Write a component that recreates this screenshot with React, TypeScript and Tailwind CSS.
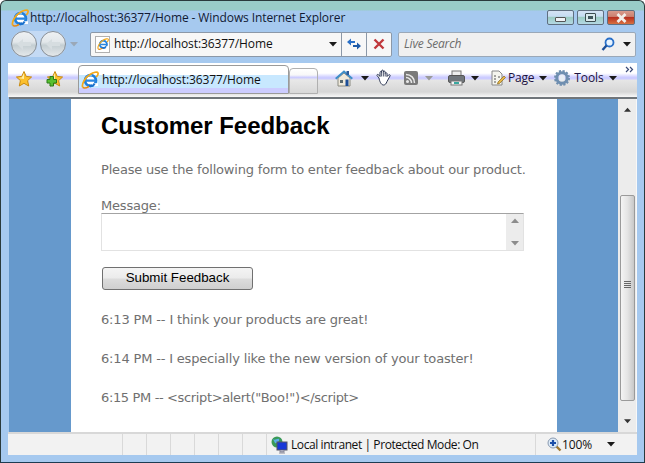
import React from "react";

const chrome = "font-['Open_Sans','Noto_Sans',sans-serif]";
const page = "font-['DejaVu_Sans',sans-serif]";

function IeLogo({ size = 18 }: { size?: number }) {
  return (
    <svg width={size} height={size} viewBox="0 0 18 18" className="shrink-0">
      <circle cx="9.5" cy="9.5" r="5.4" fill="#fff" stroke="#1f7fdc" strokeWidth="2.8" />
      <path d="M5 8.6H15V10.8H5Z" fill="#2a86e0" />
      <path d="M11 12.3H17V15H11Z" fill="#fff" />
      <path d="M13.5 12.6C12.5 14.8 10 15.6 7.6 14.6" fill="none" stroke="#1a70cc" strokeWidth="2.2" />
      <path d="M5.2 7.5C6 5 8.5 3.8 11 4.6" fill="none" stroke="#7cc4f8" strokeWidth="1.1" />
      <path d="M1.8 16.4C0.2 13.5 4 6.5 9 3.5C12.5 1.2 16.5 0.4 17 2C17.4 3.3 16.2 5 15.2 6" fill="none" stroke="#f4a818" strokeWidth="1.7" />
      <path d="M1.8 16.4C3.2 17.6 6 16.6 8 15.4" fill="none" stroke="#e88a10" strokeWidth="1.7" />
    </svg>
  );
}

function Caret({ color = "#1a1a1a", w = 8, className = "" }: { color?: string; w?: number; className?: string }) {
  return (
    <svg width={w} height={5} viewBox="0 0 8 5" className={`shrink-0 ${className}`}>
      <path d="M0 0H8L4 4.5Z" fill={color} />
    </svg>
  );
}

function Star({ plus = false }: { plus?: boolean }) {
  return (
    <svg width="18" height="18" viewBox="0 0 18 18" className="shrink-0">
      <path d="M9 1.5L11.2 6.4L16.6 7L12.6 10.6L13.7 16L9 13.3L4.3 16L5.4 10.6L1.4 7L6.8 6.4Z" fill="#fbc02d" stroke="#c98a10" strokeWidth="1" />
      <path d="M9 3L6.8 7.5L3 8L9 9Z" fill="#fff0a8" />
      {plus && <path d="M1 9.5H4V6.5H7.5V9.5H10.5V13H7.5V16H4V13H1Z" fill="#58c030" stroke="#2a7a18" strokeWidth="1" />}
    </svg>
  );
}

function NavButton({ className = "" }: { className?: string }) {
  return (
    <div className={`w-[26px] h-[26px] rounded-full border-[1.5px] border-[#878e96] bg-[linear-gradient(#eef1f3_0%,#e2e7ea_42%,#c4ced2_55%,#e4e8ea_100%)] flex items-center justify-center shrink-0 ${className}`}>
      <svg width="16" height="13" viewBox="0 0 16 13">
        <path d="M1 6L7 1V4H15V8H7V12Z" fill="#d6dde0" />
      </svg>
    </div>
  );
}

function WinButton({ children, className = "" }: { children: React.ReactNode; className?: string }) {
  return (
    <div className={`h-[15px] rounded-[2px] border border-[#5f6f80] flex items-center justify-center ${className}`}>{children}</div>
  );
}

function StatusCell({ className = "" }: { className?: string }) {
  return <div className={`h-full border-r border-[#d9d9d9] shrink-0 ${className}`} />;
}

export default function App() {
  return (
    <div className={`${chrome} w-[645px] h-[463px] flex flex-col overflow-hidden rounded-t-[6px] border border-[#2a3a3c] border-b-[#1d3c52] bg-[linear-gradient(#99ccc8_0,#99ccc8_9px,#a6c9ef_10px,#a6c9ef_100%)] text-[12px] text-[#101828]`}>
      {/* Title bar */}
      <div className="h-[29px] shrink-0 flex items-center pl-[10px] pr-[9px] pt-[4px]">
        <IeLogo />
        <span className="ml-[1px] text-[12px] text-[#111a33] tracking-[-0.1px] whitespace-nowrap">http://localhost:36377/Home - Windows Internet Explorer</span>
        <div className="ml-auto flex gap-[3px]">
          <WinButton className="w-[27px] bg-[linear-gradient(#d4e2f2_0%,#c6dcf2_40%,#9cccc4_50%,#b4d8e4_100%)]">
            <div className="w-[11px] h-[5px] mt-[4px] border border-[#555] bg-[#eef2f6] rounded-[1px]" />
          </WinButton>
          <WinButton className="w-[27px] bg-[linear-gradient(#d4e2f2_0%,#c6dcf2_40%,#9cccc4_50%,#b4d8e4_100%)]">
            <div className="w-[11px] h-[9px] border border-[#3c4c50] bg-[#d8e8ec] rounded-[1px] flex items-center justify-center">
              <div className="w-[5px] h-[3px] bg-[#40545a]" />
            </div>
          </WinButton>
          <WinButton className="w-[28px] border-[#5a2a30] bg-[linear-gradient(#d89a8c_0%,#cc8070_42%,#b83020_50%,#d87040_100%)]">
            <svg width="13" height="10" viewBox="0 0 13 10"><path d="M2.5 1L10.5 9M10.5 1L2.5 9" stroke="#f2eeea" strokeWidth="2.8" /></svg>
          </WinButton>
        </div>
      </div>

      {/* Navigation row */}
      <div className="h-[33px] shrink-0 flex items-center pl-[10px] pr-[8px] pb-[5px]">
        <div className="flex rounded-full bg-[#c4daf4]">
          <NavButton />
          <NavButton className="ml-[3px]" />
        </div>
        <Caret color="#9aa8b8" className="ml-[4px]" />
        <div className="ml-[12px] w-[302px] h-[25px] flex items-center bg-[#f7f7f7] border border-[#8b98a8] rounded-[2px] shrink-0">
          <div className="w-[23px] flex justify-center shrink-0">
            <div className="relative w-[15px] h-[17px] bg-white border border-[#b0b0b0] flex items-center justify-center">
              <IeLogo size={12} />
            </div>
          </div>
          <span className="text-[12px] text-[#111] tracking-[-0.1px] whitespace-nowrap">http://localhost:36377/Home</span>
          <Caret className="ml-auto mr-[4px]" />
          <div className="w-[25px] h-full border-l border-[#8b98a8] flex items-center justify-center shrink-0">
            <svg width="16" height="14" viewBox="0 0 16 14">
              <path d="M1 5L5 1.5V4H9V6H5V8.5Z" fill="#2a70c8" />
              <path d="M15 9L11 12.5V10H7V8H11V5.5Z" fill="#1d5aa8" />
            </svg>
          </div>
          <div className="w-[25px] h-full border-l border-[#8b98a8] flex items-center justify-center shrink-0">
            <svg width="12" height="12" viewBox="0 0 12 12"><path d="M1.5 1.5L10.5 10.5M10.5 1.5L1.5 10.5" stroke="#c0383c" strokeWidth="2.4" /></svg>
          </div>
        </div>
        <div className="ml-[6px] flex-1 h-[25px] flex items-center bg-[#f0f0f0] border border-[#9aa8b8] rounded-[2px] pl-[5px] pr-[4px]">
          <span className="italic text-[12px] text-[#6c6c6c] tracking-[-0.2px]">Live Search</span>
          <svg width="14" height="15" viewBox="0 0 14 15" className="ml-auto">
            <circle cx="8.5" cy="5.5" r="4" fill="#e8f4ff" stroke="#2a70c8" strokeWidth="1.8" />
            <path d="M5.5 8.5L1.5 13" stroke="#1d4f98" strokeWidth="2.4" />
          </svg>
          <Caret className="ml-[8px]" />
        </div>
      </div>

      {/* Command row */}
      <div className="h-[34px] shrink-0 ml-[7px] mr-[7px] flex bg-[linear-gradient(#ffffff_0%,#ffffff_30%,#ccccff_42%,#ccccff_47%,#e6e6e6_50%,#d6d6d6_85%,#f8f8f8_100%)]">
        <div className="w-[70px] shrink-0 h-[31px] mt-[1px] pl-[7px] flex items-center gap-[13px] pb-[2px]">
          <Star />
          <Star plus />
        </div>
        <div className="w-[211px] shrink-0 h-[29px] mt-[2px] flex items-center border border-[#9a9a9a] rounded-t-[4px] pl-[2px] bg-[linear-gradient(#ffffff_0%,#ffffff_33%,#c8e8ff_34%,#c8e8ff_82%,#ccccff_83%,#ccccff_100%)]">
          <IeLogo />
          <span className="ml-[3px] text-[12px] text-[#111] tracking-[-0.1px] whitespace-nowrap">http://localhost:36377/Home</span>
        </div>
        <div className="w-[29px] shrink-0 h-[26px] mt-[5px] border border-[#b0b0b0] rounded-t-[4px] bg-[linear-gradient(#ffffff_0%,#f8f8f8_25%,#ccccff_35%,#e8e8e8_45%,#d8d8d8_100%)]" />
        <div className="flex-1 flex items-center pl-[17px] pb-[4px] relative">
          <svg width="18" height="17" viewBox="0 0 18 17" className="shrink-0">
            <path d="M3 8L9 3L15 8V16H3Z" fill="#efe9da" stroke="#8a8a80" />
            <path d="M0.7 8.8L9 1.5L17.3 8.8" fill="none" stroke="#3f8fc8" strokeWidth="2" />
            <rect x="10.5" y="9.5" width="3" height="6.5" fill="#1d4f98" />
            <rect x="5" y="10" width="3" height="3" fill="#5a6a70" />
            <rect x="11.5" y="1" width="2.5" height="4" fill="#2a5a98" />
          </svg>
          <Caret className="ml-[8px]" />
          <svg width="16" height="18" viewBox="0 0 16 18" className="ml-[7px] shrink-0">
            <path d="M3 9L1 6.5C0.5 5.5 2 5 2.8 6L4 7.5V3.5C4 2.2 5.6 2.2 5.6 3.5V2C5.6 0.8 7.4 0.8 7.4 2V3C7.4 1.8 9.2 1.8 9.2 3V4.5C9.2 3.5 11 3.5 11 4.5V7.5L12.5 6C13.5 5.2 14.6 6 14 7L11 12.5C10 15 9 16 7.5 16C5 16 3.5 12 3 9Z" fill="#fff" stroke="#2a3450" strokeWidth="1" />
            <path d="M5.6 3.5V7.5M7.4 3V7.5M9.2 4.5V7.5" stroke="#2a3450" strokeWidth="0.8" />
          </svg>
          <svg width="14" height="14" viewBox="0 0 14 14" className="ml-[12px] shrink-0">
            <rect width="14" height="14" rx="2" fill="#7a7a7a" />
            <circle cx="3.5" cy="10.5" r="1.5" fill="#e8e8e8" />
            <path d="M2 6.5C5 6.5 7.5 9 7.5 12M2 3.5C7 3.5 10.5 7 10.5 12" fill="none" stroke="#e8e8e8" strokeWidth="1.5" />
          </svg>
          <Caret color="#9a9a9a" className="ml-[7px]" />
          <svg width="17" height="16" viewBox="0 0 17 16" className="ml-[15px] shrink-0">
            <rect x="4" y="1" width="9" height="5" fill="#eee" stroke="#777" />
            <rect x="0.5" y="5.5" width="16" height="7" rx="1.5" fill="#70767c" stroke="#555" />
            <rect x="3" y="11" width="11" height="4" fill="#f5f5f5" stroke="#777" />
            <rect x="6" y="12" width="5" height="2" fill="#3aa8a0" />
          </svg>
          <Caret className="ml-[6px]" />
          <svg width="15" height="16" viewBox="0 0 15 16" className="ml-[12px] shrink-0">
            <path d="M1 1H8L11 4V15H1Z" fill="#f5f5ee" stroke="#888" />
            <path d="M3 6H5M3 9H5M3 12H5M7 7H9" stroke="#555" />
            <path d="M7 12L13 6L14.5 7.5L8.5 13.5L6.5 14Z" fill="#e8b848" stroke="#8a6a20" strokeWidth="0.7" />
          </svg>
          <span className="ml-[2px] text-[#1c1240] tracking-[-0.2px]">Page</span>
          <Caret className="ml-[5px]" />
          <svg width="16" height="16" viewBox="0 0 16 16" className="ml-[7px] shrink-0">
            <circle cx="8" cy="8" r="5.2" fill="none" stroke="#6f8fb0" strokeWidth="3" />
            <circle cx="8" cy="8" r="7" fill="none" stroke="#6f8fb0" strokeWidth="2" strokeDasharray="2.2 1.5" />
            <circle cx="8" cy="8" r="3" fill="#e8eef4" />
          </svg>
          <span className="ml-[4px] text-[#1c1240] tracking-[-0.1px]">Tools</span>
          <Caret className="ml-[5px]" />
          <svg width="9" height="7" viewBox="0 0 9 7" className="absolute right-[3px] top-[3px]">
            <path d="M1 1L3.5 3.5L1 6M5 1L7.5 3.5L5 6" fill="none" stroke="#3a4a78" strokeWidth="1.2" />
          </svg>
        </div>
      </div>

      {/* Browser viewport */}
      <div className="flex-1 min-h-0 ml-[8px] mr-[7px] flex border-t-2 border-[#70757a]">
        <div className={`flex-1 min-w-0 bg-[#6699cc] ${page}`}>
          <div className="w-[486px] ml-[62px] h-full bg-white pl-[30px] text-[13px] text-[#707070] tracking-[-0.19px] overflow-hidden">
            <h1 className="font-['Liberation_Sans',sans-serif] text-[24px] leading-[28px] font-bold tracking-[-0.05px] text-black mt-[13px]">Customer Feedback</h1>
            <p className="mt-[22px] leading-[16px] whitespace-nowrap">Please use the following form to enter feedback about our product.</p>
            <div className="mt-[20px] leading-[16px]">Message:</div>
            <div className="w-[423px] h-[38px] -mt-[1px] flex bg-white border border-[#e2e2e2] border-t-[#a3a3a3]">
              <div className="flex-1" />
              <div className="w-[17px] bg-[#ececec] flex flex-col items-center justify-between py-[4px]">
                <Caret color="#8c8c8c" className="rotate-180" />
                <Caret color="#8c8c8c" />
              </div>
            </div>
            <button className="block w-[151px] h-[23px] mt-[16px] ml-[1px] pb-[2px] font-['Liberation_Sans',sans-serif] text-[13.33px] leading-[20px] tracking-normal text-black border border-[#707070] rounded-[3px] bg-[linear-gradient(#f4f4f4_0%,#ebebeb_48%,#dcdcdc_52%,#cfcfcf_100%)]">Submit Feedback</button>
            <p className="mt-[22px] leading-[16px] tracking-[-0.15px]">6:13 PM -- I think your products are great!</p>
            <p className="mt-[23px] leading-[16px] tracking-[-0.17px]">6:14 PM -- I especially like the new version of your toaster!</p>
            <p className="mt-[23px] leading-[16px] tracking-[-0.36px]">6:15 PM -- &lt;script&gt;alert("Boo!")&lt;/script&gt;</p>
          </div>
        </div>
        <div className="w-[19px] shrink-0 bg-[#ececec] flex flex-col items-center border-r border-[#f8f8f8]">
          <Caret color="#333" w={7} className="rotate-180 mt-[8px]" />
          <div className="w-[15px] h-[206px] mt-[83px] pb-[28px] rounded-[2px] border border-[#9a9a9a] bg-[linear-gradient(90deg,#f4f4f4_0%,#e4e4e4_50%,#c8c8c8_100%)] flex flex-col items-center justify-center gap-[1px]">
            <div className="w-[7px] h-[1px] bg-[#666]" />
            <div className="w-[7px] h-[1px] bg-[#666]" />
            <div className="w-[7px] h-[1px] bg-[#666]" />
            <div className="w-[7px] h-[1px] bg-[#666]" />
          </div>
          <Caret color="#333" w={7} className="mt-[18px]" />
        </div>
      </div>

      {/* Status bar */}
      <div className="h-[23px] shrink-0 ml-[7px] mr-[7px] mb-[7px] flex items-center border-t-2 border-[#d8d8d8] bg-[#f2f2f2] text-[12px] text-[#101010]">
        <StatusCell className="w-[115px]" />
        <StatusCell className="w-[24px]" />
        <StatusCell className="w-[24px]" />
        <StatusCell className="w-[24px]" />
        <StatusCell className="w-[24px]" />
        <StatusCell className="w-[24px]" />
        <StatusCell className="w-[24px]" />
        <div className="w-[269px] h-full border-r border-[#d9d9d9] flex items-center pl-[4px] shrink-0">
          <svg width="17" height="18" viewBox="0 0 17 18" className="shrink-0">
            <circle cx="6" cy="6" r="5.5" fill="#3a9a58" />
            <path d="M2 3C4 5 6 2 8 3C9 5 6 8 4 7Z" fill="#5ab0e8" />
            <rect x="6" y="6" width="10" height="8" fill="#1838d8" stroke="#556" />
            <path d="M9 14V16H13V14M8 17H14" stroke="#889" fill="#aab" />
          </svg>
          <span className="ml-[3px] tracking-[-0.42px] whitespace-nowrap">Local intranet | Protected Mode: On</span>
        </div>
        <svg width="15" height="15" viewBox="0 0 15 15" className="ml-[11px] shrink-0">
          <path d="M9 9L13.5 13.5" stroke="#a07830" strokeWidth="2.4" />
          <circle cx="6" cy="6" r="5" fill="#dceaf8" stroke="#8a9ab0" />
          <path d="M3 6H9M6 3V9" stroke="#1d4fa8" strokeWidth="2.2" />
        </svg>
        <span className="tracking-[-0.1px]">100%</span>
        <Caret className="ml-[15px]" />
      </div>
    </div>
  );
}
